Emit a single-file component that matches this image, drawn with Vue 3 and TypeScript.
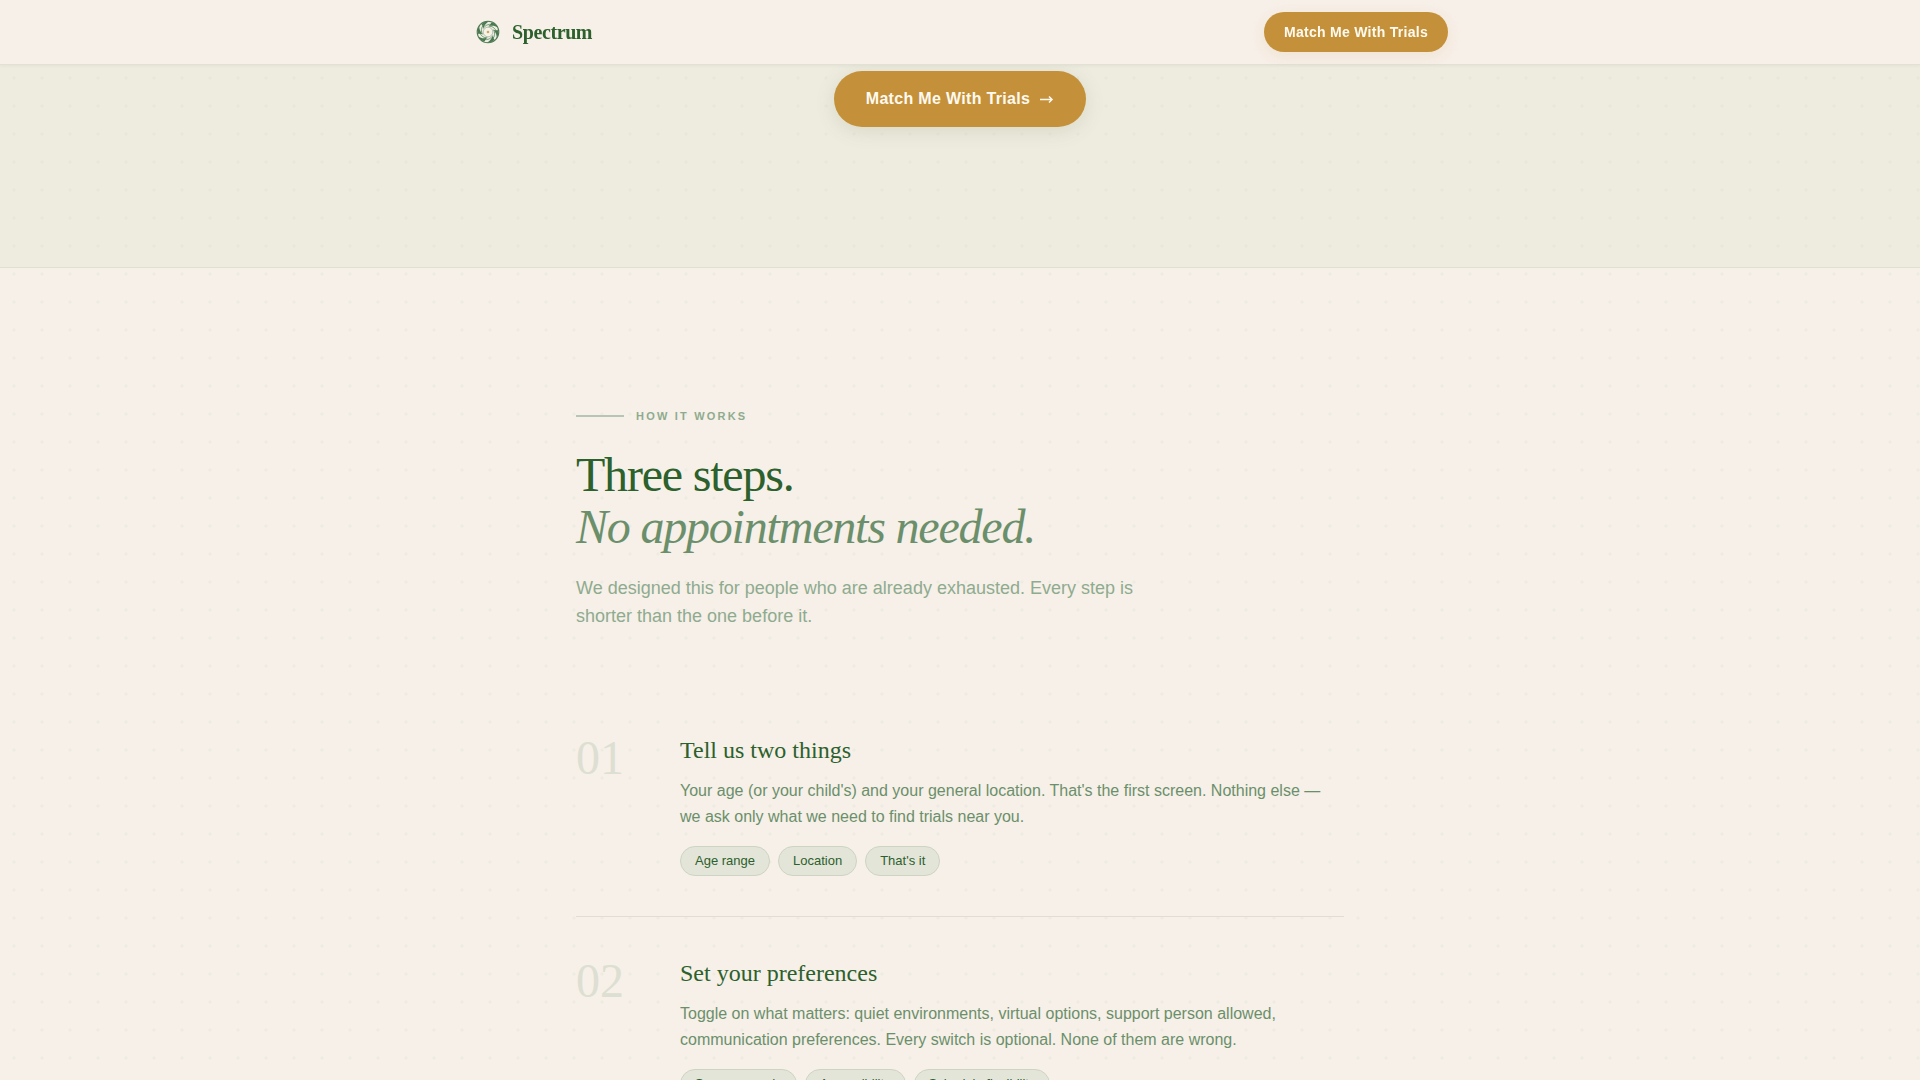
<script setup lang="ts">
interface Step {
  number: string
  title: string
  text: string
  tags: string[]
}

const steps: Step[] = [
  {
    number: '01',
    title: 'Tell us two things',
    text: "Your age (or your child's) and your general location. That's the first screen. Nothing else — we ask only what we need to find trials near you.",
    tags: ['Age range', 'Location', "That's it"],
  },
  {
    number: '02',
    title: 'Set your preferences',
    text: 'Toggle on what matters: quiet environments, virtual options, support person allowed, communication preferences. Every switch is optional. None of them are wrong.',
    tags: ['Sensory needs', 'Accessibility', 'Schedule flexibility'],
  },
]

const blades: number[] = [0, 60, 120, 180, 240, 300]
</script>

<template>
  <div class="page">
    <header class="topbar">
      <div class="topbar-inner">
        <a class="brand" href="#">
          <svg class="brand-mark" viewBox="0 0 32 32" aria-hidden="true">
            <circle cx="16" cy="16" r="10.8" fill="#eceee2" stroke="#4f7b53" stroke-width="1.1" />
            <g v-for="angle in blades" :key="angle" :transform="`rotate(${angle} 16 16)`">
              <path d="M9.500 8.500 C11.500 6 14 5.200 17 5.400 C14.500 6.600 12.600 8.600 11.300 12.500 C11.100 10.800 10.500 9.600 9.500 8.500 Z" fill="#4b7850" />
              <path d="M11.300 12.500 C13 9.400 16 7.800 20.500 8.600" fill="none" stroke="#5f8a62" stroke-width="0.800" />
            </g>
            <circle cx="16" cy="16" r="4.800" fill="#f6f2e8" stroke="#86a385" stroke-width="0.600" />
            <circle cx="16" cy="16" r="1.300" fill="#d3a45c" />
          </svg>
          <span>Spectrum</span>
        </a>
        <button class="cta cta-small" type="button">Match Me With Trials</button>
      </div>
    </header>

    <main>
      <section class="hero">
        <button class="cta cta-large" type="button">
          <span>Match Me With Trials</span>
          <svg class="arrow" viewBox="0 0 16 16" aria-hidden="true">
            <path d="M2 8.500 H14 M11 5.500 L14 8.500 L11 11.500" />
          </svg>
        </button>
      </section>

      <section class="how">
        <p class="eyebrow">How it works</p>
        <h2>Three steps.<br /><em>No appointments needed.</em></h2>
        <p class="intro">
          We designed this for people who are already exhausted. Every step is shorter than the one before it.
        </p>
        <ol class="steps">
          <li v-for="step in steps" :key="step.number" class="step">
            <span class="step-number">{{ step.number }}</span>
            <div class="step-body">
              <h3>{{ step.title }}</h3>
              <p>{{ step.text }}</p>
              <ul class="tags">
                <li v-for="tag in step.tags" :key="tag">{{ tag }}</li>
              </ul>
            </div>
          </li>
        </ol>
      </section>
    </main>
  </div>
</template>

<style>
body {
  margin: 0;
  background: #f6f0e8;
}
</style>

<style scoped>
.page {
  height: 100vh;
  overflow-y: auto;
  scrollbar-width: none;
  background-color: #f6f0e8;
  background-image: radial-gradient(circle, rgba(45, 90, 45, 0.04) 1px, transparent 2px);
  background-size: 28px 28px;
  background-position: 0 8px;
  font-family: "Liberation Sans", Arial, sans-serif;
  color: #2c602c;
}

.topbar {
  position: sticky;
  top: 0;
  z-index: 10;
  background: #f7f0e9;
  border-bottom: 1px solid #e3e1d5;
  box-shadow: 0 1px 3px rgba(45, 90, 45, 0.06);
}

.topbar-inner {
  box-sizing: border-box;
  max-width: 1024px;
  height: 64px;
  margin: 0 auto;
  padding: 0 24px;
  display: flex;
  align-items: center;
  justify-content: space-between;
}

.brand {
  display: flex;
  align-items: center;
  gap: 8px;
  color: #2c602c;
  font-family: "Liberation Serif", "Times New Roman", serif;
  font-size: 20px;
  font-weight: 700;
  letter-spacing: -0.02em;
  text-decoration: none;
}

.brand-mark {
  width: 32px;
  height: 32px;
}

.cta {
  display: inline-flex;
  align-items: center;
  gap: 8px;
  border: 0;
  border-radius: 999px;
  background: #c4913a;
  color: #fffaf0;
  font-family: inherit;
  font-weight: 700;
  letter-spacing: 0.02em;
  cursor: pointer;
}

.cta-small {
  height: 40px;
  padding: 0 20px;
  font-size: 14px;
  box-shadow: 0 4px 16px rgba(196, 145, 58, 0.14);
}

.cta-large {
  height: 56px;
  padding: 0 32px;
  font-size: 16px;
  box-shadow: 0 4px 20px rgba(100, 100, 50, 0.14);
}

.arrow {
  width: 16px;
  height: 16px;
  fill: none;
  stroke: currentColor;
  stroke-width: 1.5;
}

.hero {
  display: flex;
  justify-content: center;
  padding: 6px 24px 140px;
  background: rgba(206, 220, 192, 0.2);
  border-bottom: 1px solid #e0dfd0;
}

.how {
  max-width: 768px;
  margin: 0 auto;
  padding: 140px 24px;
}

.eyebrow {
  display: flex;
  align-items: center;
  gap: 12px;
  margin: 0 0 25px;
  color: #8fab8f;
  font-size: 11px;
  font-weight: 700;
  line-height: 16px;
  letter-spacing: 0.2em;
  text-transform: uppercase;
}

.eyebrow::before {
  content: "";
  width: 48px;
  height: 2px;
  background: #b9c4b4;
}

h2 {
  margin: 0 0 21px;
  font-family: "Liberation Serif", "Times New Roman", serif;
  font-size: 48px;
  font-weight: 400;
  line-height: 52px;
  letter-spacing: -0.025em;
}

h2 em {
  color: #6b8f6b;
}

.intro {
  max-width: 576px;
  margin: 0 0 64px;
  color: #8fab8f;
  font-size: 18px;
  line-height: 28px;
}

.steps,
.tags {
  list-style: none;
  margin: 0;
  padding: 0;
}

.step {
  display: flex;
  padding: 40px 0;
  border-bottom: 1px solid #e3dcd4;
}

.step-number {
  flex: 0 0 104px;
  color: #dddfd2;
  font-family: "Liberation Serif", "Times New Roman", serif;
  font-size: 48px;
  line-height: 48px;
}

.step-body {
  flex: 1;
}

h3 {
  margin: 0 0 12px;
  font-family: "Liberation Serif", "Times New Roman", serif;
  font-size: 24px;
  font-weight: 400;
  line-height: 32px;
}

.step-body p {
  margin: 0 0 16px;
  color: #6b8f6b;
  font-size: 16px;
  line-height: 26px;
}

.tags {
  display: flex;
  flex-wrap: wrap;
  gap: 8px;
}

.tags li {
  padding: 4px 14px;
  border: 1px solid #cdd4c3;
  border-radius: 999px;
  background: #e4e5d9;
  font-size: 13px;
  line-height: 20px;
}
</style>
